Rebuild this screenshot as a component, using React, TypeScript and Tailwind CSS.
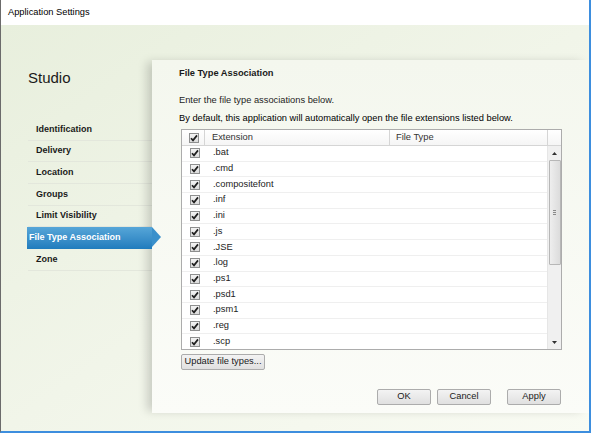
import React from "react"

const navItems = [
  "Identification",
  "Delivery",
  "Location",
  "Groups",
  "Limit Visibility",
  "File Type Association",
  "Zone",
]

const extensions = [
  ".bat",
  ".cmd",
  ".compositefont",
  ".inf",
  ".ini",
  ".js",
  ".JSE",
  ".log",
  ".ps1",
  ".psd1",
  ".psm1",
  ".reg",
  ".scp",
]

function Check() {
  return (
    <div className="flex h-[10px] w-[10px] items-center justify-center border border-[#8e8f8f] bg-gradient-to-b from-[#f4f4f4] to-[#dcdcdc]">
      <svg width="8" height="8" viewBox="0 0 8 8">
        <path d="M1 4.2 L3 6.4 L7 1.4" fill="none" stroke="#1f1f1f" strokeWidth="1.7" />
      </svg>
    </div>
  )
}

function WinButton({ label, className }: { label: string; className: string }) {
  return (
    <button
      className={`flex h-[16px] items-center justify-center rounded-[2px] border border-[#acacac] bg-gradient-to-b from-[#f3f3f3] to-[#e0e0e0] text-[9.3px] leading-none text-[#1a1a1a] ${className}`}
    >
      {label}
    </button>
  )
}

export default function App() {
  return (
    <div
      className="flex h-[433px] w-[591px] flex-col overflow-hidden border-b-2 border-l border-r-2 border-b-[#3d8ede] border-l-[#6b6b6b] border-r-[#3d8ede] bg-white text-[#1e1e1e]"
      style={{ fontFamily: '"Liberation Sans", Arial, sans-serif' }}
    >
      {/* title bar */}
      <div className="flex h-[25px] shrink-0 items-center bg-white pl-[7px] text-[9.3px] text-black">
        Application Settings
      </div>

      <div className="flex flex-1 bg-gradient-to-br from-[#e8efdd] via-[#f1f5e9] to-[#f9fbf3]">
        {/* sidebar */}
        <div className="w-[151px] shrink-0 pt-[43px]">
          <div className="pl-[27px] text-[15px] leading-[20px] text-[#1a1a1a]">Studio</div>
          <ul className="ml-[27px] mt-[31px]">
            {navItems.map((item) => {
              const selected = item === "File Type Association"
              return (
                <li
                  key={item}
                  className={
                    selected
                      ? "relative z-10 -ml-[1px] flex h-[21.67px] items-center bg-gradient-to-b from-[#56a6d8] to-[#1f7cbd] pl-[2px] text-[9px] font-bold text-white"
                      : "flex h-[21.67px] items-center border-b border-[#e3e7dc] pl-[8px] text-[9px] font-bold text-[#1a1a1a]"
                  }
                >
                  {item}
                  {selected && (
                    <span className="absolute -right-[9px] top-0 h-0 w-0 border-y-[10.8px] border-l-[9px] border-y-transparent border-l-[#3a90cb]" />
                  )}
                </li>
              )
            })}
          </ul>
        </div>

        {/* content panel */}
        <div className="mb-[18px] mt-[35px] flex flex-1 flex-col bg-gradient-to-b from-[#f4f7ee] to-[#fbfcf8] pl-[27px] pr-[28px] pt-[7px] shadow-[-7px_0_9px_-2px_rgba(0,0,0,0.17)]">
          <div className="text-[9.3px] font-bold leading-[12px] text-[#1a1a1a]">File Type Association</div>
          <div className="mt-[15px] text-[9.3px] leading-[12px]">Enter the file type associations below.</div>
          <div className="mt-[6px] text-[9.3px] leading-[12px] text-black">
            By default, this application will automatically open the file extensions listed below.
          </div>

          {/* table */}
          <div className="ml-[2px] mt-[5px] flex h-[221px] w-[381px] shrink-0 flex-col border border-[#acacac] bg-white">
            <div className="flex h-[16px] shrink-0 border-b border-[#d5d5d5] bg-gradient-to-b from-white to-[#f5f5f5] text-[9.3px] text-[#333]">
              <div className="flex w-[23px] items-center justify-center border-r border-[#d5d5d5] pl-[1px]">
                <Check />
              </div>
              <div className="flex w-[185px] items-center border-r border-[#d5d5d5] pl-[7px]">Extension</div>
              <div className="flex flex-1 items-center border-r border-[#d5d5d5] pl-[6px]">File Type</div>
              <div className="w-[13px]" />
            </div>
            <div className="flex flex-1 overflow-hidden">
              <div className="flex-1">
                {extensions.map((ext) => (
                  <div key={ext} className="flex h-[15.7px] items-center border-b border-[#efefef] text-[9.3px] text-[#222]">
                    <div className="flex w-[24px] justify-center pl-[1px]">
                      <Check />
                    </div>
                    <div className="pl-[7px]">{ext}</div>
                  </div>
                ))}
              </div>
              {/* scrollbar */}
              <div className="flex w-[14px] flex-col items-center border-l border-[#e6e6e6] bg-[#f0f0f0]">
                <div className="flex h-[14px] items-center justify-center">
                  <svg width="5" height="3" viewBox="0 0 5 3">
                    <path d="M0 3 L2.5 0 L5 3 Z" fill="#303030" />
                  </svg>
                </div>
                <div className="flex h-[105px] w-[12px] items-center justify-center rounded-[1px] border border-[#b7b7b7] bg-gradient-to-r from-[#eeeeee] to-[#dcdcdc]">
                  <div className="flex flex-col gap-[1px]">
                    <div className="h-[1px] w-[3px] bg-[#8a8a8a]" />
                    <div className="h-[1px] w-[3px] bg-[#8a8a8a]" />
                    <div className="h-[1px] w-[3px] bg-[#8a8a8a]" />
                  </div>
                </div>
                <div className="flex-1" />
                <div className="flex h-[14px] items-center justify-center">
                  <svg width="5" height="3" viewBox="0 0 5 3">
                    <path d="M0 0 L2.5 3 L5 0 Z" fill="#303030" />
                  </svg>
                </div>
              </div>
            </div>
          </div>

          <div className="ml-[2px] mt-[4px] flex">
            <WinButton label="Update file types..." className="w-[84px]" />
          </div>

          <div className="mt-[19px] flex justify-end gap-[6px] pr-[1px]">
            <WinButton label="OK" className="w-[54px]" />
            <WinButton label="Cancel" className="w-[54px]" />
            <WinButton label="Apply" className="ml-[10px] w-[54px]" />
          </div>
        </div>
      </div>
    </div>
  )
}
